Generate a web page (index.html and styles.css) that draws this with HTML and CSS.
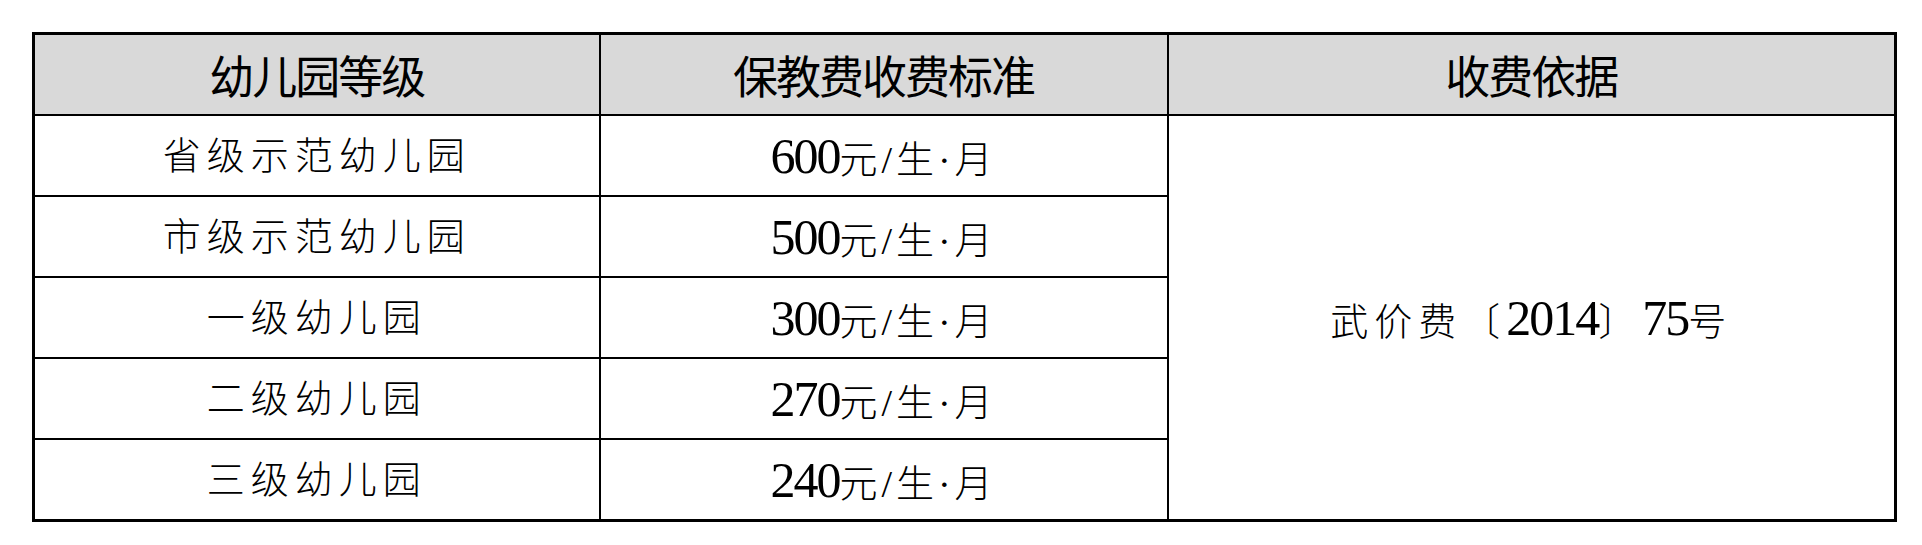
FILE: index.html
```html
<!DOCTYPE html>
<html lang="zh-CN">
<head>
<meta charset="utf-8">
<title>保教费收费标准</title>
<link rel="stylesheet" href="styles.css">
</head>
<body>
<table class="fee-table">
  <colgroup>
    <col class="c1">
    <col class="c2">
    <col class="c3">
  </colgroup>
  <thead>
    <tr class="head-row">
      <th>幼儿园等级</th>
      <th>保教费收费标准</th>
      <th>收费依据</th>
    </tr>
  </thead>
  <tbody>
    <tr class="row">
      <td class="level">省级示范幼儿园</td>
      <td class="price"><span class="num">600</span>元/生·月</td>
      <td class="basis" rowspan="5">武价费〔<span class="num">2014</span>〕<span class="num">75</span>号</td>
    </tr>
    <tr class="row">
      <td class="level">市级示范幼儿园</td>
      <td class="price"><span class="num">500</span>元/生·月</td>
    </tr>
    <tr class="row">
      <td class="level">一级幼儿园</td>
      <td class="price"><span class="num">300</span>元/生·月</td>
    </tr>
    <tr class="row">
      <td class="level">二级幼儿园</td>
      <td class="price"><span class="num">270</span>元/生·月</td>
    </tr>
    <tr class="row">
      <td class="level">三级幼儿园</td>
      <td class="price"><span class="num">240</span>元/生·月</td>
    </tr>
  </tbody>
</table>
</body>
</html>
```

FILE: styles.css
```css
html, body {
  margin: 0;
  padding: 0;
  background: #ffffff;
}

body {
  padding: 32px 0 0 32px;
  font-family: "Liberation Serif", "Noto Sans CJK SC", serif;
  color: #000;
}

.fee-table {
  border-collapse: collapse;
  table-layout: fixed;
  width: 1862px;
  border: 3px solid #000;
}

.c1 { width: 566px; }
.c2 { width: 568px; }
.c3 { width: 728px; }

.fee-table th,
.fee-table td {
  border: 2px solid #000;
  padding: 0;
  text-align: center;
  vertical-align: middle;
}

.head-row th {
  height: 79px;
  background: #d9d9d9;
  font-family: "Noto Sans CJK SC", sans-serif;
  font-weight: 400;
  font-size: 45px;
  letter-spacing: -2px;
  line-height: 1;
}

.row td {
  height: 79px;
  font-family: "Liberation Serif", "Noto Sans CJK SC", serif;
  font-weight: 300;
  font-size: 38px;
  line-height: 1;
}

.level {
  letter-spacing: 6px;
  padding-left: 6px;
}

.price {
  letter-spacing: 4px;
}

.basis {
  letter-spacing: 6px;
}

.num {
  font-family: "Liberation Serif", serif;
  font-weight: 400;
  font-size: 50px;
  letter-spacing: -2px;
}
```
